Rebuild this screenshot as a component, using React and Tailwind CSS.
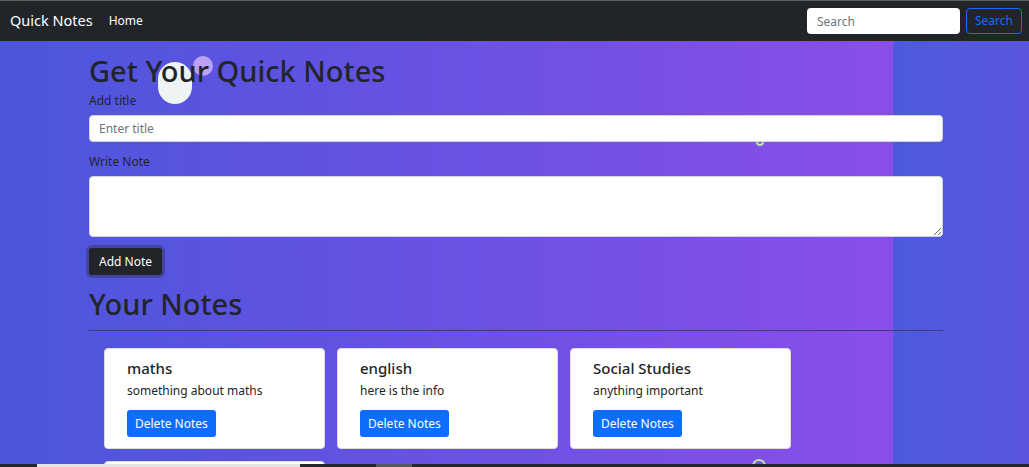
import React, { useState } from "react";

const notes = [
    { id: 1, title: "maths", body: "something about maths" },
    { id: 2, title: "english", body: "here is the info" },
    { id: 3, title: "Social Studies", body: "anything important" },
    { id: 4, title: "", body: "", empty: true },
];

function NoteCard({ note }) {
    return (
        <div className="w-[221px] h-[101px] bg-white rounded-[4px] border border-[#dcdcdc] pl-[22px] pt-[10px] shrink-0">
            {!note.empty && (
                <>
                    <h5 className="text-[15px] font-medium text-[#212529] leading-[19px]">{note.title}</h5>
                    <p className="text-[12px] text-[#212529] mt-[5px] leading-[16px]">{note.body}</p>
                    <button className="mt-[11px] h-[27px] px-[8px] bg-[#0d6efd] text-white text-[12px] rounded-[3px]">
                        Delete Notes
                    </button>
                </>
            )}
        </div>
    );
}

export default function App() {
    const [title, setTitle] = useState("");
    const [body, setBody] = useState("");

    return (
        <div className="w-[1029px] h-[467px] overflow-hidden relative font-['Noto_Sans',sans-serif] text-[#212529]">
            {/* navbar */}
            <nav className="h-[41px] bg-[#212529] border-t border-[#5a5d61] flex items-center pl-[10px] pr-[7px]">
                <span className="text-white text-[14.5px]">Quick Notes</span>
                <span className="text-white text-[12px] ml-[16px]">Home</span>
                <div className="ml-auto flex items-center gap-[6px]">
                    <input
                        placeholder="Search"
                        className="w-[153px] h-[26px] bg-white rounded-[4px] px-[10px] text-[12px] placeholder-[#6c757d] outline-none"
                    />
                    <button className="w-[56px] h-[26px] border border-[#0d6efd] rounded-[4px] text-[#0d6efd] text-[12px]">
                        Search
                    </button>
                </div>
            </nav>

            {/* main */}
            <main className="h-[426px] bg-[linear-gradient(to_right,#4c56dc_0%,#6a51e4_45%,#8a4eea_86.8%,#4d5adc_86.8%,#5a55e0_100%)] relative">
                <div className="absolute left-[158px] top-[21px] w-[34px] h-[42px] rounded-full bg-[#eef4f4]" />
                <div className="absolute left-[193px] top-[15px] w-[20px] h-[20px] rounded-full bg-[#c6a8f5]/90" />
                <div className="absolute left-[756px] top-[100px] w-[8px] h-[5px] rounded-b-full border-2 border-t-0 border-[#b8e6a8]" />
                <div className="absolute left-[752px] top-[418px] w-[14px] h-[14px] rounded-full border-2 border-[#b8e6a8]" />

                <div className="ml-[89px] w-[854px] relative">
                    <h1 className="text-[29px] font-medium leading-[36px] pt-[12px]">Get Your Quick Notes</h1>
                    <label className="block text-[12px] mt-[4px] leading-[16px]">Add title</label>
                    <input
                        value={title}
                        onChange={(e) => setTitle(e.target.value)}
                        placeholder="Enter title"
                        className="block w-full h-[27px] mt-[6px] bg-white rounded-[4px] border border-[#ced4da] px-[9px] text-[12px] placeholder-[#6c757d] outline-none"
                    />
                    <label className="block text-[12px] mt-[12px] leading-[16px]">Write Note</label>
                    <textarea
                        value={body}
                        onChange={(e) => setBody(e.target.value)}
                        className="block w-full h-[61px] mt-[6px] bg-white rounded-[4px] border border-[#ced4da] px-[9px] text-[12px] outline-none"
                    />
                    <button className="mt-[11px] h-[27px] px-[10px] bg-[#212529] text-white text-[12px] rounded-[3px] ring-[3px] ring-[#3c3f8a]/70">
                        Add Note
                    </button>
                    <h2 className="text-[29px] font-medium leading-[34px] mt-[12px]">Your Notes</h2>
                    <hr className="mt-[9px] border-t border-[#3e3b78]" />
                    <div className="flex flex-wrap gap-x-[12px] gap-y-[12px] pl-[15px] mt-[17px]">
                        {notes.map((n) => (
                            <NoteCard key={n.id} note={n} />
                        ))}
                    </div>
                </div>
            </main>

            {/* scrollbar strip */}
            <div className="absolute left-0 bottom-0 w-full h-[3px] bg-[#23272e] flex">
                <div className="ml-[37px] w-[263px] h-full bg-[#e4e4e4]" />
                <div className="ml-[76px] w-[36px] h-full bg-[#55585e]" />
            </div>
        </div>
    );
}
